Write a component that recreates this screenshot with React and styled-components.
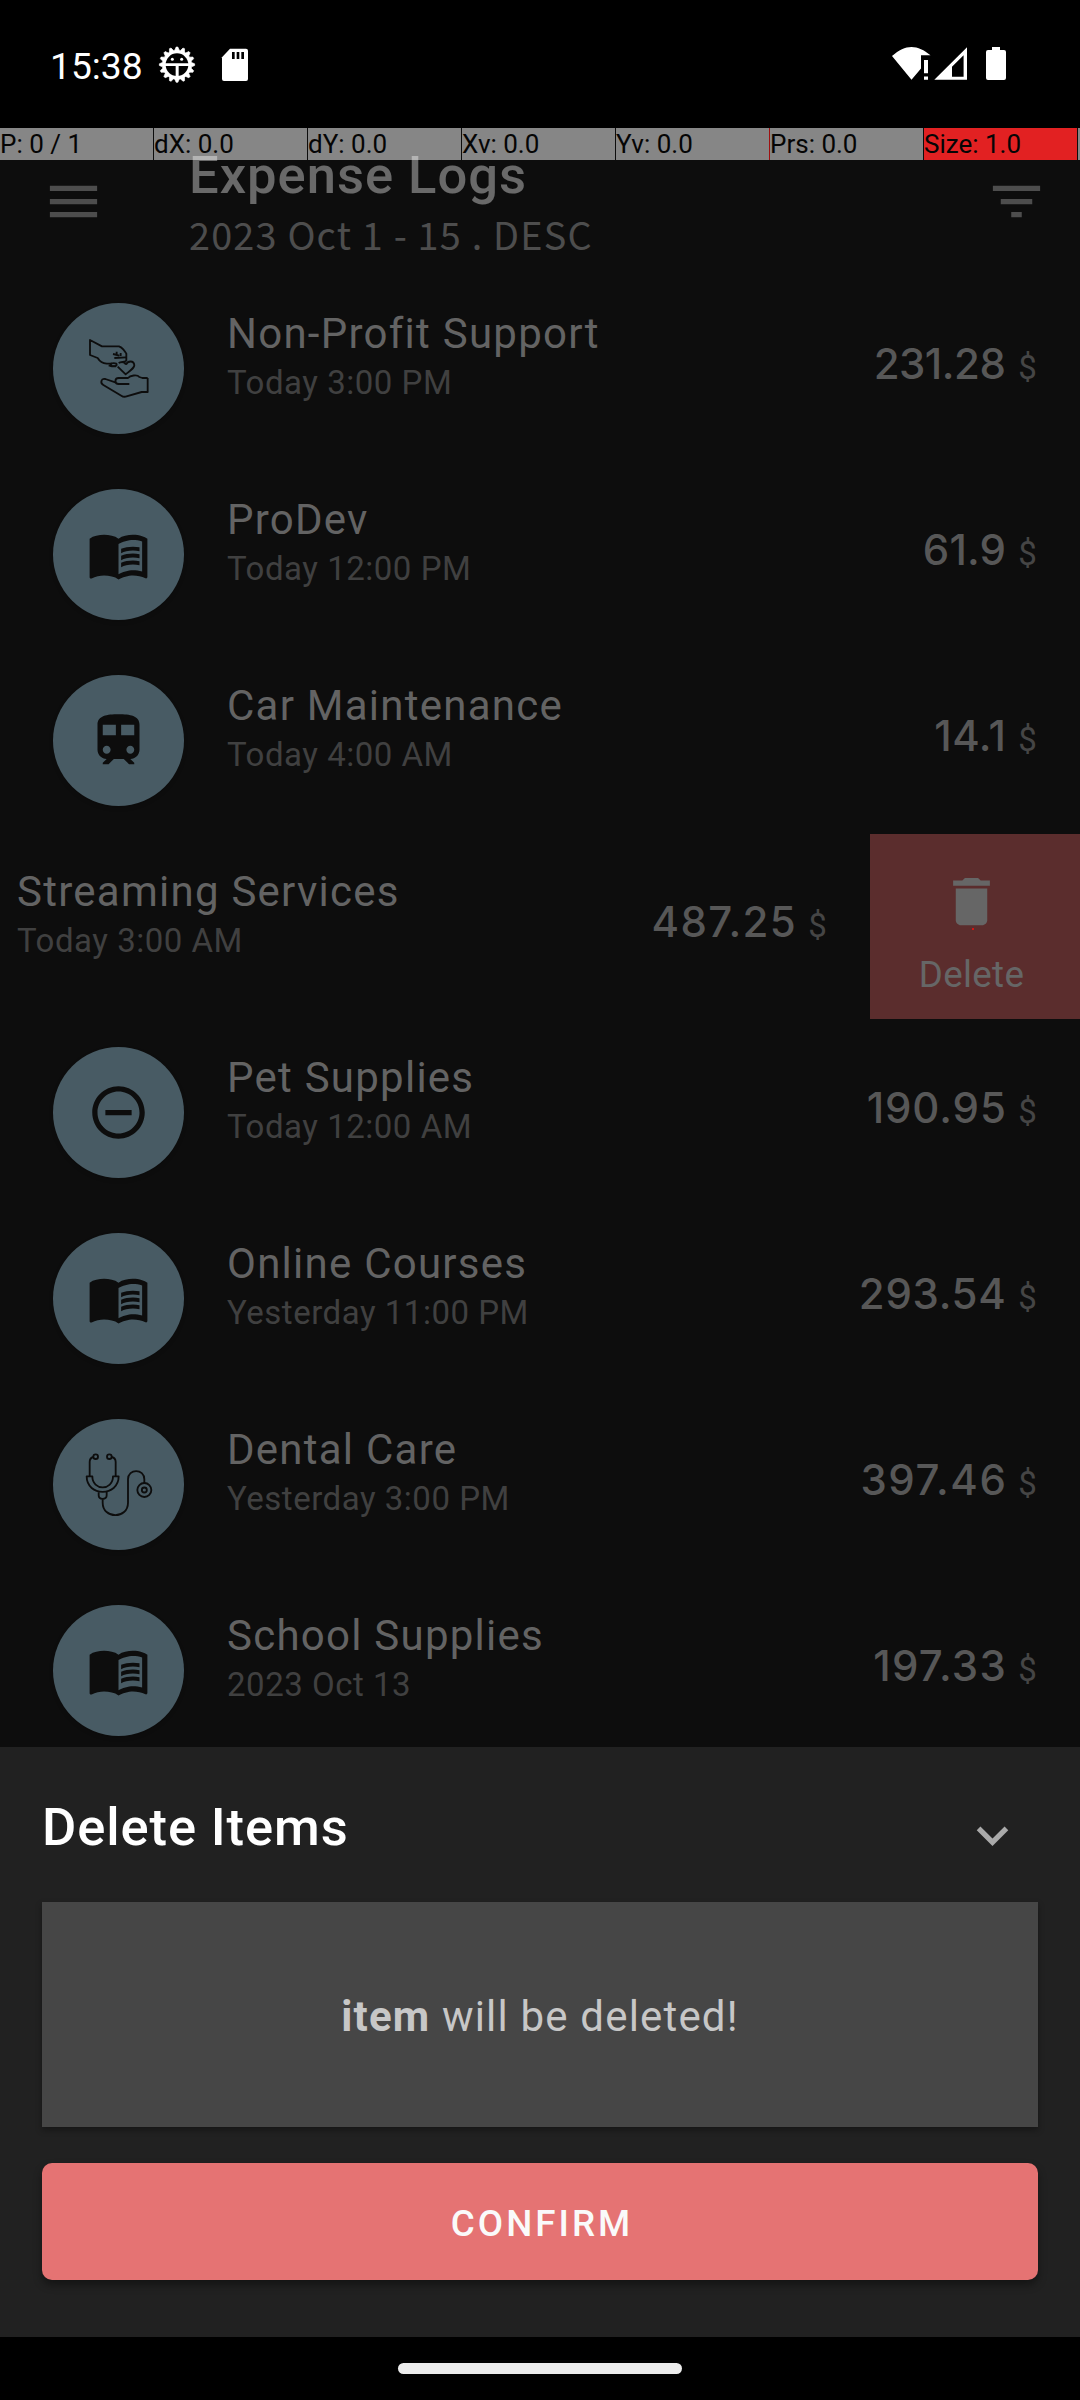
import React from "react";
import styled, { createGlobalStyle } from "styled-components";

const Global = createGlobalStyle`
  body { margin: 0; background: #0d0d0d; font-family: Roboto, sans-serif; }
  * { box-sizing: border-box; }
`;

const Screen = styled.div`
  width: 1080px;
  height: 2400px;
  overflow: hidden;
  display: flex;
  flex-direction: column;
  background: #0d0d0d;
`;

const StatusBar = styled.header`
  height: 128px;
  flex: none;
  background: #000;
  color: #fff;
  display: flex;
  align-items: center;
  justify-content: space-between;
  padding: 4px 70px 0 50px;
`;

const StatusGroup = styled.div`
  display: flex;
  align-items: center;
`;

const StatusArt = styled.svg`
  width: ${(p) => p.$w}px;
  height: 40px;
  fill: #fff;
  flex: none;
`;

const Clock = styled.span`
  font-size: 37.2px;
  line-height: 44px;
  width: 106px;
  white-space: nowrap;
`;

const PointerBar = styled.div`
  height: 32px;
  flex: none;
  display: grid;
  grid-template-columns: repeat(6, 153px) 153px 3px;
  column-gap: 1px;
  background: #0d0d0d;
`;

const PointerCell = styled.div`
  background: ${(p) => (p.$hot ? "#e22122" : "#868686")};
  color: #050505;
  font-size: 26px;
  line-height: 32px;
  white-space: nowrap;
  overflow: hidden;
  box-shadow: ${(p) => (p.$mark ? "-1px 0 0 #a01010" : "none")};
`;

const AppBar = styled.div`
  height: 116px;
  flex: none;
  display: flex;
  align-items: flex-start;
  padding: 10px 32px 0 42px;
`;

const BarIcon = styled.svg`
  width: 63px;
  height: 63px;
  flex: none;
  fill: #4d4d4d;
`;

const Titles = styled.div`
  flex: 1;
  margin: -26px 0 0 84px;
  position: relative;
  white-space: nowrap;
`;

const Title = styled.div`
  font-size: 52.5px;
  font-weight: 500;
  line-height: 62px;
  letter-spacing: 1px;
  color: rgba(255, 255, 255, 0.38);
`;

const Subtitle = styled.div`
  font-family: "Noto Sans CJK JP", sans-serif;
  font-size: 37.8px;
  line-height: 55px;
  letter-spacing: 1.2px;
  color: #4d4d4d;
`;

const List = styled.main`
  height: 1471px;
  flex: none;
  overflow: hidden;
`;

const Row = styled.div`
  height: 186px;
  display: flex;
  align-items: flex-start;
  padding: 27px 42px 0 53px;
  margin-left: ${(p) => (p.$swiped ? "-210px" : "0")};
`;

const Avatar = styled.div`
  width: 131px;
  height: 131px;
  border-radius: 50%;
  background: #485b64;
  flex: none;
  display: grid;
  place-items: center;
  box-shadow: 0 2px 4px rgba(0, 0, 0, 0.15);
`;

const Glyph = styled.svg`
  width: 63px;
  height: 63px;
  fill: ${(p) => p.$color || "#0d0d0d"};
`;

const LineArt = styled.svg`
  width: 131px;
  height: 131px;
  fill: none;
  stroke: #0d0d0d;
  stroke-width: 5.5;
  stroke-linejoin: round;
`;

const RowText = styled.div`
  flex: 1;
  margin: 1px 0 0 43px;
  white-space: nowrap;
`;

const Name = styled.div`
  font-size: 42px;
  line-height: 60px;
  letter-spacing: 1.25px;
  color: #636363;
`;

const When = styled.div`
  font-size: 33px;
  line-height: 38px;
  letter-spacing: 0.52px;
  color: #404040;
`;

const Amount = styled.div`
  display: flex;
  align-items: baseline;
  font-family: Inter, sans-serif;
  font-size: 42px;
  font-weight: 500;
  line-height: 60px;
  letter-spacing: ${(p) => 1.3 + p.$tracking}px;
  margin-top: 31px;
  color: #575757;
`;

const Currency = styled.span`
  font-family: Roboto, sans-serif;
  font-size: 33px;
  font-weight: 400;
  letter-spacing: 1.3px;
  margin-left: ${(p) => 11 - p.$tracking}px;
  color: #454545;
`;

const DeleteAction = styled.button`
  position: relative;
  border: 0;
  width: 210px;
  height: 185px;
  flex: none;
  margin: -27px -42px 0 42px;
  padding: 36px 7px 0 0;
  background: #5b2d2d;
  color: #666;
  display: flex;
  flex-direction: column;
  align-items: center;
  font-family: Roboto, sans-serif;
  font-size: 36.75px;
  line-height: 44px;
  letter-spacing: 0.3px;
  gap: 20px;
`;

const TouchDot = styled.i`
  position: absolute;
  left: 102px;
  top: 94px;
  width: 2px;
  height: 2px;
  background: #d01515;
`;

const Sheet = styled.section`
  height: 590px;
  flex: none;
  background: #212121;
  padding: 46px 42px 0;
`;

const SheetHead = styled.div`
  display: flex;
  justify-content: space-between;
  height: 109px;
  padding-right: 14px;
`;

const SheetTitle = styled.h2`
  margin: 0;
  font-size: 52.5px;
  font-weight: 500;
  line-height: 68px;
  letter-spacing: 0.9px;
  color: #fff;
`;

const Chevron = styled.svg`
  width: 63px;
  height: 63px;
  margin-top: 11px;
  fill: #aaa;
`;

const Message = styled.div`
  height: 225px;
  background: #464646;
  box-shadow: 0 3px 6px rgba(0, 0, 0, 0.35);
  display: grid;
  place-items: center;
  padding-top: 3px;
  font-size: 42px;
  letter-spacing: 1.18px;
  color: #c7c7c7;
`;

const Confirm = styled.button`
  display: block;
  width: 100%;
  height: 117px;
  margin-top: 36px;
  border: 0;
  border-radius: 10px;
  background: #e57373;
  box-shadow: 0 5px 9px rgba(0, 0, 0, 0.4);
  color: #fafafa;
  font-family: Roboto, sans-serif;
  font-size: 36.75px;
  font-weight: 500;
  letter-spacing: 3px;
  padding: 4px 0 0 4px;
`;

const NavBar = styled.footer`
  flex: 1;
  background: #000;
  display: grid;
  place-items: center;
`;

const Handle = styled.div`
  width: 284px;
  height: 11px;
  border-radius: 6px;
  background: #ececec;
`;

const TEETH = 16;
const gearPoints = Array.from({ length: TEETH * 4 }, (_, i) => {
  const a = ((i - 0.5) / (TEETH * 4)) * Math.PI * 2 - Math.PI / 2;
  const r = i % 4 < 2 ? 53 : 44;
  return `${(81 + r * Math.cos(a)).toFixed(1)},${(92 + r * Math.sin(a)).toFixed(1)}`;
}).join(" ");

const Notifications = () => (
  <StatusArt $w={96} viewBox="156 46 96 40">
    <g transform="translate(150 34) scale(0.3333)">
      <polygon points={gearPoints} strokeLinejoin="round" stroke="#fff" strokeWidth="2" />
      <circle cx="81" cy="92" r="34" fill="#000" />
      <path d="M45 88h72v8H45zM77 92h9v36h-9z" />
      <circle cx="67" cy="76" r="4.5" />
      <circle cx="95" cy="76" r="4.5" />
      <path d="M240 44h48q6 0 6 6v85q0 6-6 6h-66q-6 0-6-6V70z" />
      <path fill="#000" d="M246 54h8v21h-8zM260 54h8v21h-8zM274 54h8v21h-8z" />
    </g>
  </StatusArt>
);

const Connectivity = () => (
  <StatusArt $w={120} viewBox="890 46 120 40">
    <path d="M892 56C899 50 905 47 911.5 47S924 50 930.500 55.300H921V68.500L911.500 79.700z" />
    <path d="M924 60h4v13.300h-4zM924 76.500h4v3.300h-4z" />
    <path fillRule="evenodd" d="M934.300 79.800L967 47.300V79.800zM952 66.700V76.700H963.600V55.200z" />
    <path d="M992 47h8v3h4q2 0 2 2v26q0 2-2 2h-16q-2 0-2-2V52q0-2 2-2h4z" />
  </StatusArt>
);

const Book = () => (
  <Glyph viewBox="0 0 24 24">
    <path d="M21 5c-1.110-.35-2.330-.5-3.500-.5-1.950 0-4.050.4-5.500 1.500-1.450-1.100-3.550-1.500-5.500-1.500S2.450 4.900 1 6v14.650c0 .25.25.5.5.5.1 0 .15-.05.25-.05C3.100 20.450 5.050 20 6.500 20c1.950 0 4.050.4 5.500 1.500 1.350-.85 3.800-1.500 5.500-1.500 1.650 0 3.350.3 4.750 1.050.1.05.15.05.25.05.25 0 .5-.25.5-.5V6c-.6-.45-1.250-.75-2-1zm0 13.500c-1.100-.35-2.300-.5-3.500-.5-1.700 0-4.150.65-5.500 1.500V8c1.350-.85 3.800-1.500 5.500-1.500 1.200 0 2.400.15 3.500.5v11.500z" />
    <path d="M17.500 10.500c.88 0 1.730.09 2.500.26V9.240c-.79-.15-1.640-.24-2.500-.24-1.700 0-3.240.29-4.500.83v1.660c1.130-.64 2.700-.99 4.500-.99zM13 12.490v1.660c1.130-.64 2.700-.99 4.500-.99.88 0 1.730.09 2.500.26V11.900c-.79-.15-1.640-.24-2.500-.24-1.700 0-3.240.3-4.500.83zM17.500 14.330c-1.700 0-3.240.29-4.500.83v1.660c1.130-.64 2.700-.99 4.500-.99.88 0 1.730.09 2.500.26v-1.520c-.79-.16-1.640-.24-2.500-.24z" />
  </Glyph>
);

const Train = () => (
  <Glyph viewBox="0 0 24 24">
    <path d="M12 2c-4.420 0-8 .5-8 4v9.500C4 17.430 5.570 19 7.500 19L6 20.500v.5h2.230l2-2H14l2 2h2v-.5L16.500 19c1.930 0 3.500-1.570 3.500-3.500V6c0-3.500-3.580-4-8-4zM7.500 17c-.83 0-1.500-.67-1.500-1.500S6.670 14 7.500 14s1.500.67 1.500 1.500S8.330 17 7.500 17zm3.500-7H6V6h5v4zm2 0V6h5v4h-5zm3.500 7c-.83 0-1.500-.67-1.500-1.500s.67-1.500 1.500-1.500 1.500.67 1.500 1.500-.67 1.500-1.500 1.500z" />
  </Glyph>
);

const MinusCircle = () => (
  <Glyph viewBox="0 0 24 24">
    <path d="M7 11v2h10v-2H7zm5-9C6.480 2 2 6.480 2 12s4.480 10 10 10 10-4.480 10-10S17.520 2 12 2zm0 18c-4.410 0-8-3.590-8-8s3.590-8 8-8 8 3.590 8 8-3.590 8-8 8z" />
  </Glyph>
);

const Charity = () => (
  <LineArt viewBox="9 9 393 393">
    <path d="M186 191H170C158 190 150 186 143 174L120 165V120L156 139H207C218 143 224 152 229 161V182C222 188 214 184 206 189" />
    <path d="M189 162L208 167M200 155v9M212 159v9M193 174L228 172" />
    <ellipse cx="191" cy="194" rx="9" ry="4.500" />
    <path d="M176 196L186 199H198" />
    <path d="M228 194C232 182 252 180 253 196C253 203 247 207 227 223L203 200M228 194C225 188 221 186 216 186" />
    <path d="M293 234V276H275L227 290C222 291 218 290 214 287L160 255C150 249 153 234 166 237L196 247" />
    <path d="M238 252H206C193 252 193 234 206 234H234C240 226 262 223 268 231L277 234H293" />
  </LineArt>
);

const Stethoscope = () => (
  <LineArt viewBox="9 9 393 393">
    <circle cx="137" cy="122" r="7" />
    <circle cx="178" cy="122" r="7" />
    <path d="M130 123C122 125 119 130 119 138V181M185 123C193 125 197 130 197 138V181" />
    <path d="M110 181H127C127 225 189 225 189 181H206C206 243 110 243 110 181z" />
    <path d="M146 229V238C146 252 170 252 170 238V228" />
    <path d="M158 250V260C158 310 234 310 234 260V190C234 157 283 157 283 190V201" />
    <circle cx="283" cy="222" r="21" />
    <circle cx="283" cy="222" r="7.500" />
  </LineArt>
);

const glyphs = { charity: Charity, book: Book, train: Train, minus: MinusCircle, steth: Stethoscope };

const expenses = [
  { name: "Non-Profit Support", when: "Today 3:00 PM", amount: "231.28", icon: "charity", tracking: -1.8 },
  { name: "ProDev", when: "Today 12:00 PM", amount: "61.9", icon: "book", tracking: -1.2 },
  { name: "Car Maintenance", when: "Today 4:00 AM", amount: "14.1", icon: "train", tracking: -0.8 },
  { name: "Streaming Services", when: "Today 3:00 AM", amount: "487.25", icon: "minus", swiped: true, tracking: 0.1 },
  { name: "Pet Supplies", when: "Today 12:00 AM", amount: "190.95", icon: "minus", tracking: -0.4 },
  { name: "Online Courses", when: "Yesterday 11:00 PM", amount: "293.54", icon: "book", tracking: -0.6 },
  { name: "Dental Care", when: "Yesterday 3:00 PM", amount: "397.46", icon: "steth", tracking: 0.3 },
  { name: "School Supplies", when: "2023 Oct 13", amount: "197.33", icon: "book", tracking: 0 },
];

const pointer = ["P: 0 / 1", "dX: 0.0", "dY: 0.0", "Xv: 0.0", "Yv: 0.0", "Prs: 0.0", "Size: 1.0", ""];

function ExpenseRow({ item }) {
  const Icon = glyphs[item.icon];
  return (
    <Row $swiped={item.swiped}>
      <Avatar><Icon /></Avatar>
      <RowText>
        <Name>{item.name}</Name>
        <When>{item.when}</When>
      </RowText>
      <Amount $tracking={item.tracking}>
        {item.amount}
        <Currency $tracking={item.tracking}>$</Currency>
      </Amount>
      {item.swiped && (
        <DeleteAction>
          <Glyph $color="#666" viewBox="0 0 24 24">
            <path d="M6 19c0 1.100.9 2 2 2h8c1.100 0 2-.9 2-2V7H6v12zM19 4h-3.500l-1-1h-5l-1 1H5v2h14V4z" />
          </Glyph>
          Delete
          <TouchDot />
        </DeleteAction>
      )}
    </Row>
  );
}

export default function App() {
  return (
    <Screen>
      <Global />
      <StatusBar>
        <StatusGroup>
          <Clock>15:38</Clock>
          <Notifications />
        </StatusGroup>
        <Connectivity />
      </StatusBar>
      <PointerBar>
        {pointer.map((t, i) => (
          <PointerCell key={i} $hot={i === 6} $mark={i === 5}>{t}</PointerCell>
        ))}
      </PointerBar>
      <AppBar>
        <BarIcon viewBox="0 0 24 24"><path d="M3 18h18v-2H3v2zm0-5h18v-2H3v2zm0-7v2h18V6H3z" /></BarIcon>
        <Titles>
          <Title>Expense Logs</Title>
          <Subtitle>2023 Oct 1 - 15 . DESC</Subtitle>
        </Titles>
        <BarIcon viewBox="0 0 24 24"><path d="M10 18h4v-2h-4v2zM3 6v2h18V6H3zm3 7h12v-2H6v2z" /></BarIcon>
      </AppBar>
      <List>
        {expenses.map((e) => <ExpenseRow key={e.name} item={e} />)}
      </List>
      <Sheet>
        <SheetHead>
          <SheetTitle>Delete Items</SheetTitle>
          <Chevron viewBox="0 0 24 24"><path d="M7.410 8.590L12 13.170l4.590-4.580L18 10l-6 6-6-6z" /></Chevron>
        </SheetHead>
        <Message><span><b>item</b> will be deleted!</span></Message>
        <Confirm>CONFIRM</Confirm>
      </Sheet>
      <NavBar><Handle /></NavBar>
    </Screen>
  );
}
